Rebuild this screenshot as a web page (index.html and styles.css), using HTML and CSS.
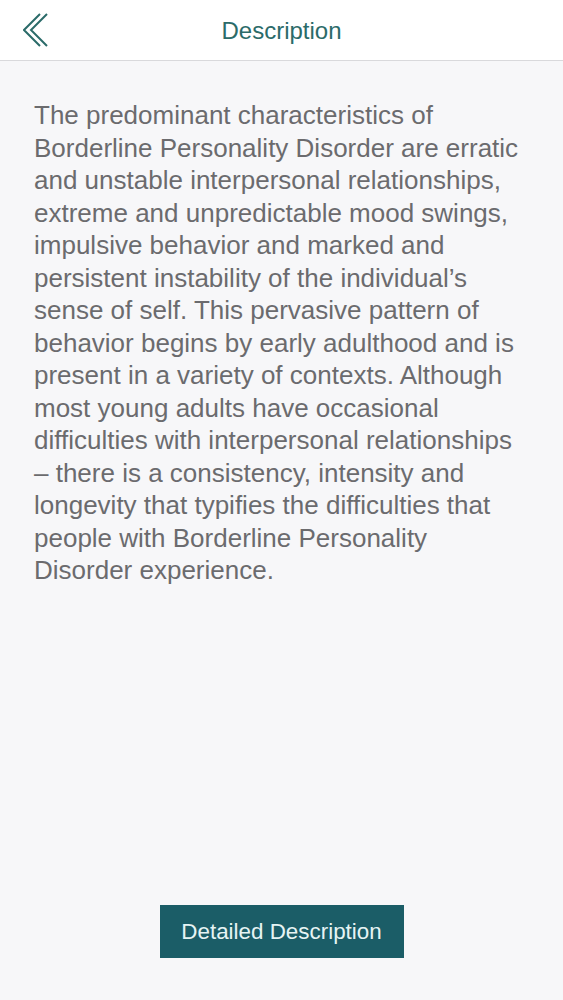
FILE: index.html
```html
<!DOCTYPE html>
<html lang="en">
<head>
<title>Description</title>
<link rel="stylesheet" href="styles.css">
</head>
<body>

<div class="screen">
  <div class="nav-bar">
    <button type="button" class="back-button" aria-label="Back">
      <svg width="30" height="36" viewBox="0 0 30 36">
        <path d="M17 2 L1 18 L17 34" fill="none" stroke="#2b6b69" stroke-width="2"/>
        <path d="M24 2 L8 18 L24 34" fill="none" stroke="#2b6b69" stroke-width="2"/>
      </svg>
    </button>
    <div class="nav-title">Description</div>
  </div>

  <div class="content">
    <p class="description-text">The predominant characteristics of Borderline Personality Disorder are erratic and unstable interpersonal relationships, extreme and unpredictable mood swings, impulsive behavior and marked and persistent instability of the individual’s sense of self. This pervasive pattern of behavior begins by early adulthood and is present in a variety of contexts. Although most young adults have occasional difficulties with interpersonal relationships – there is a consistency, intensity and longevity that typifies the difficulties that people with Borderline Personality Disorder experience.</p>
  </div>

  <div class="footer">
    <button type="button" class="detail-button">Detailed Description</button>
  </div>
</div>

</body>
</html>
```

FILE: styles.css
```css
body {
  font-family: "Liberation Sans", Arial, sans-serif;
  background-color: #f7f7f9;
  margin: 0;
}

.screen {
  display: flex;
  flex-direction: column;
  height: 100vh;
}

.nav-bar {
  position: relative;
  height: 60px;
  background-color: #ffffff;
  border-bottom: 1px solid #d9d9dc;
  display: flex;
  align-items: center;
  justify-content: center;
}

.back-button {
  position: absolute;
  left: 23px;
  top: 12px;
  padding: 0;
  border: none;
  background: none;
  cursor: pointer;
}

.nav-title {
  font-size: 24px;
  color: #2b6b69;
  padding-top: 2px;
}

.content {
  padding: 38px 0 0 34px;
  width: 490px;
}

.description-text {
  margin: 0;
  font-size: 26px;
  line-height: 32.5px;
  color: #6b6b6e;
}

.footer {
  margin-top: auto;
  display: flex;
  justify-content: center;
  padding-bottom: 42px;
}

.detail-button {
  width: 244px;
  height: 53px;
  border: none;
  background-color: #1b5d67;
  color: #e6f4f4;
  font-family: "Liberation Sans", Arial, sans-serif;
  font-size: 22.4px;
  cursor: pointer;
}
```
